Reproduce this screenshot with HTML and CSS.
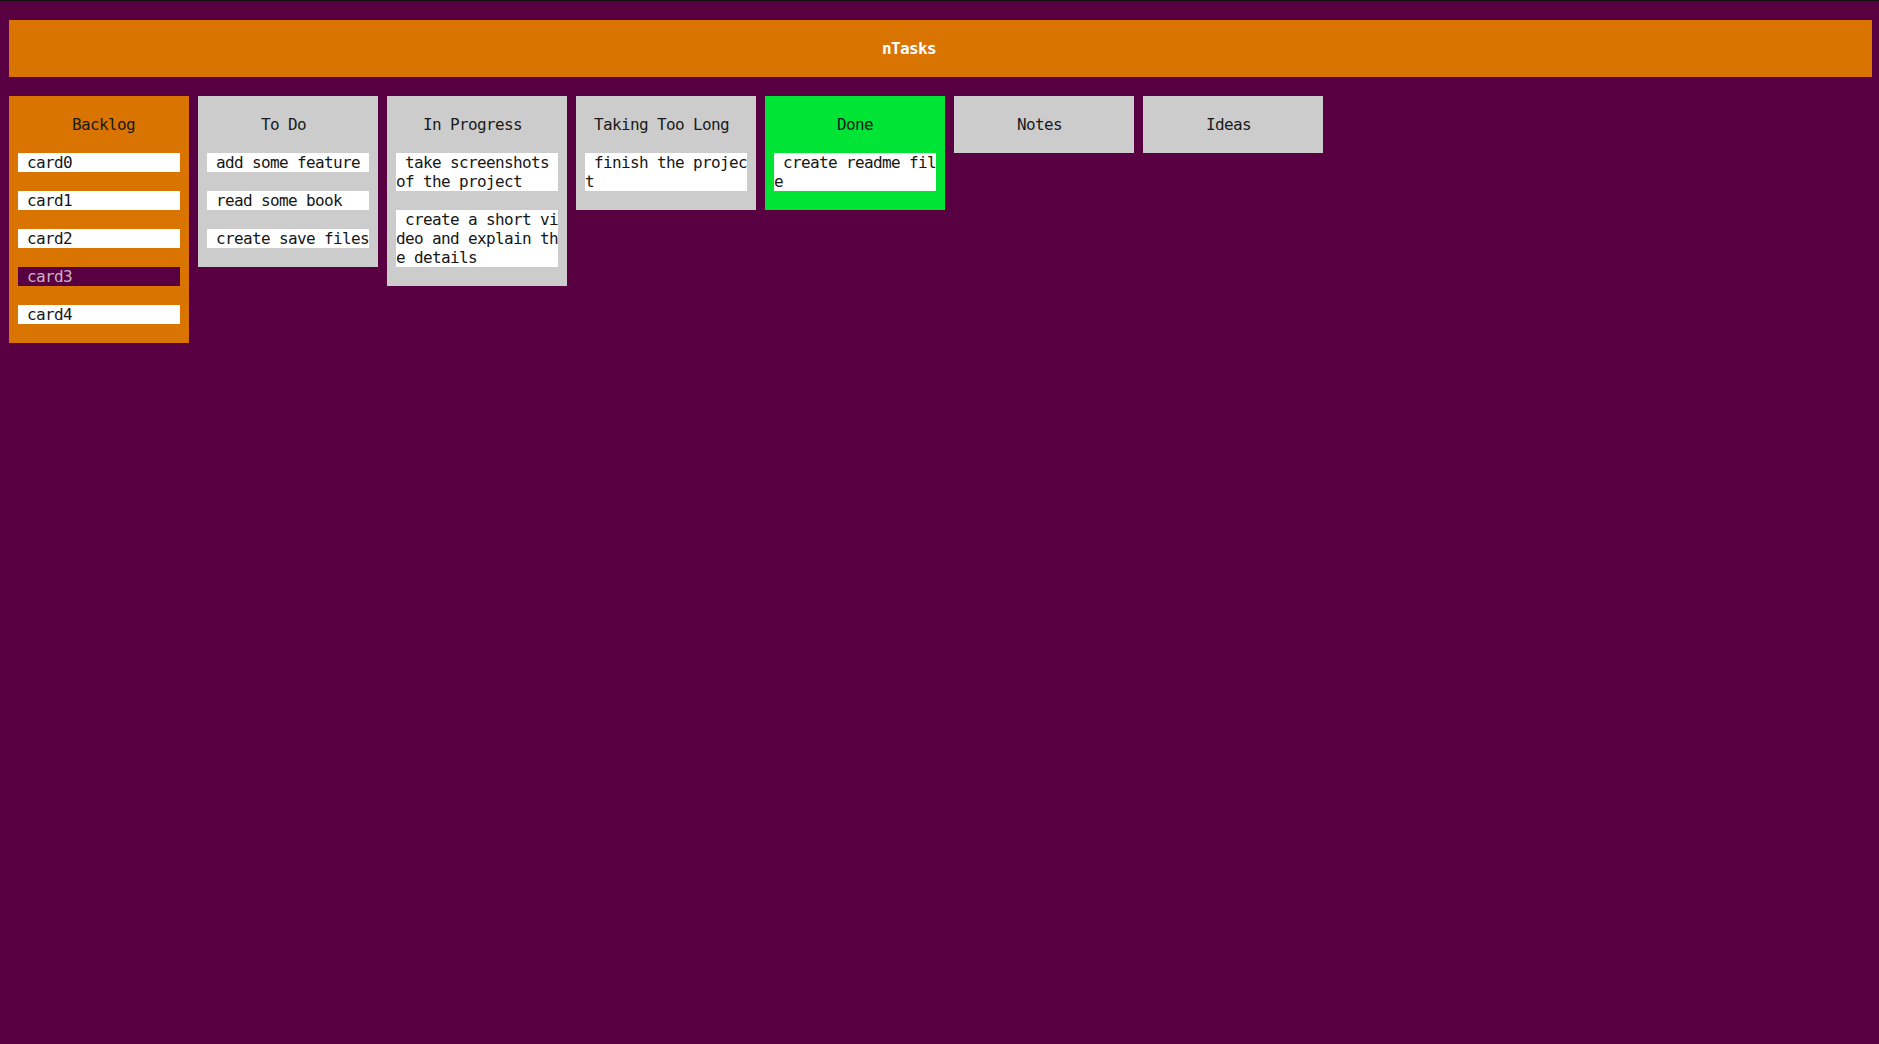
FILE: index.html
```html
<!DOCTYPE html>
<html>
<head>
<meta charset="utf-8">
<title>nTasks</title>
<link rel="stylesheet" href="styles.css">
</head>
<body>
<div class="app">
  <header class="header">nTasks</header>
  <main class="board">
    <section class="column column--orange">
      <div class="column__title column__title--right">Backlog</div>
      <div class="card"> card0</div>
      <div class="card"> card1</div>
      <div class="card"> card2</div>
      <div class="card card--selected"> card3</div>
      <div class="card"> card4</div>
    </section>
    <section class="column">
      <div class="column__title column__title--left">To Do</div>
      <div class="card"> add some feature</div>
      <div class="card"> read some book</div>
      <div class="card"> create save files</div>
    </section>
    <section class="column">
      <div class="column__title column__title--left">In Progress</div>
      <div class="card"> take screenshots of the project</div>
      <div class="card"> create a short video and explain the details</div>
    </section>
    <section class="column">
      <div class="column__title column__title--left">Taking Too Long</div>
      <div class="card"> finish the project</div>
    </section>
    <section class="column column--green">
      <div class="column__title">Done</div>
      <div class="card"> create readme file</div>
    </section>
    <section class="column">
      <div class="column__title column__title--left">Notes</div>
    </section>
    <section class="column">
      <div class="column__title column__title--left">Ideas</div>
    </section>
  </main>
</div>
</body>
</html>
```
FILE: styles.css
```css
html, body {
  margin: 0;
  padding: 0;
}

body {
  background: #580042;
  border-top: 1px solid #121212;
  min-height: 1043px;
  font-family: "DejaVu Sans Mono", "Liberation Mono", monospace;
  font-size: 16px;
  letter-spacing: -0.64px;
  line-height: 19px;
  color: #1a1a1a;
}

.app {
  padding: 19px 7px 0 9px;
}

.header {
  height: 57px;
  line-height: 57px;
  background: #d97400;
  color: #ffffff;
  font-weight: bold;
  text-align: center;
  padding-right: 63px;
}

.board {
  margin-top: 19px;
  display: flex;
  align-items: flex-start;
  gap: 9px;
}

.column {
  width: 180px;
  box-sizing: border-box;
  padding: 19px 9px;
  background: #cccccc;
  display: flex;
  flex-direction: column;
  gap: 19px;
}

.column--orange {
  background: #d97400;
}

.column--green {
  background: #00e436;
}

.column__title {
  height: 19px;
  margin: 0 -9px;
  text-align: center;
  white-space: pre;
}

.column__title--right {
  padding-left: 9px;
}

.column__title--left {
  padding-right: 9px;
}

.card {
  width: 162px;
  background: #ffffff;
  color: #161616;
  white-space: pre-wrap;
  word-break: break-all;
}

.card--selected {
  background: #580042;
  color: #cdb3c6;
}
```
